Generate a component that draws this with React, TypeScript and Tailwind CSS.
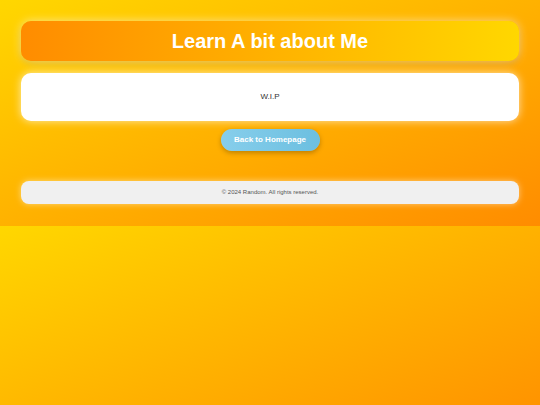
import React from "react";

export default function App() {
  return (
    <div
      className="h-[405px] w-full overflow-hidden bg-[linear-gradient(to_bottom_right,#ffd700,#ff8c00)] bg-[length:100%_226px] bg-repeat-y"
      style={{ fontFamily: '"Liberation Sans", Arial, sans-serif' }}
    >
      <div className="flex flex-col px-[21px] pt-[21px] pb-[22px]">
        <header className="flex h-[40px] items-center justify-center rounded-[10px] bg-[linear-gradient(to_right,#ff8c00,#ffd700)] shadow-[0_0_10px_rgba(255,255,255,0.55),0_3px_6px_rgba(0,0,0,0.12)]">
          <h1 className="text-[20px] font-bold leading-none text-white">Learn A bit about Me</h1>
        </header>
        <main className="mt-[12px] flex h-[48px] items-center justify-center rounded-[10px] bg-white shadow-[0_0_8px_rgba(255,255,255,0.7)]">
          <p className="text-[8px] text-[#333]">W.I.P</p>
        </main>
        <div className="mt-[8px] flex justify-center">
          <button className="flex h-[22px] w-[99px] items-center justify-center rounded-full bg-[linear-gradient(to_right,#87ceeb,#6cbfe0)] text-[8px] font-bold text-white shadow-[0_2px_5px_rgba(0,0,0,0.25)]">
            Back to Homepage
          </button>
        </div>
        <footer className="mt-[30px] flex h-[23px] items-center justify-center rounded-[8px] bg-[#f0f0f0] shadow-[0_0_6px_rgba(255,255,255,0.5)]">
          <p className="text-[6px] text-[#555]">© 2024 Random. All rights reserved.</p>
        </footer>
      </div>
    </div>
  );
}
